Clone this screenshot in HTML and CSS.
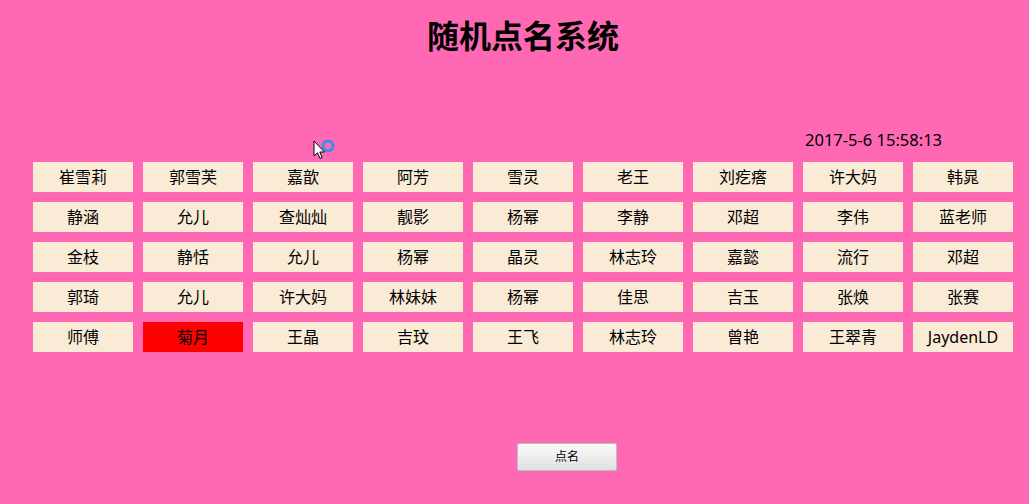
FILE: index.html
```html
<!DOCTYPE html>
<html>
    <head>
        <meta charset="utf-8">
        <title>随机点名系统</title>
        <link rel="stylesheet" href="styles.css">
    </head>
    <body>
        <h1 id="title">随机点名系统</h1>
        <div id="clock">2017-5-6 15:58:13</div>
        <div id="names">
            <div class="name">崔雪莉</div>
            <div class="name">郭雪芙</div>
            <div class="name">嘉歆</div>
            <div class="name">阿芳</div>
            <div class="name">雪灵</div>
            <div class="name">老王</div>
            <div class="name">刘疙瘩</div>
            <div class="name">许大妈</div>
            <div class="name">韩晁</div>
            <div class="name">静涵</div>
            <div class="name">允儿</div>
            <div class="name">查灿灿</div>
            <div class="name">靓影</div>
            <div class="name">杨幂</div>
            <div class="name">李静</div>
            <div class="name">邓超</div>
            <div class="name">李伟</div>
            <div class="name">蓝老师</div>
            <div class="name">金枝</div>
            <div class="name">静恬</div>
            <div class="name">允儿</div>
            <div class="name">杨幂</div>
            <div class="name">晶灵</div>
            <div class="name">林志玲</div>
            <div class="name">嘉懿</div>
            <div class="name">流行</div>
            <div class="name">邓超</div>
            <div class="name">郭琦</div>
            <div class="name">允儿</div>
            <div class="name">许大妈</div>
            <div class="name">林妹妹</div>
            <div class="name">杨幂</div>
            <div class="name">佳思</div>
            <div class="name">吉玉</div>
            <div class="name">张焕</div>
            <div class="name">张赛</div>
            <div class="name">师傅</div>
            <div class="name active">菊月</div>
            <div class="name">王晶</div>
            <div class="name">吉玟</div>
            <div class="name">王飞</div>
            <div class="name">林志玲</div>
            <div class="name">曾艳</div>
            <div class="name">王翠青</div>
            <div class="name">JaydenLD</div>
        </div>
        <div id="controls">
            <button id="pickButton">点名</button>
        </div>
        <!-- mouse cursor captured in the screenshot -->
        <svg id="cursor" width="26" height="24" viewBox="0 0 26 24">
            <path d="M1 1 L1 16 L4.5 12.8 L7 18.5 L9.2 17.5 L6.8 12 L11.5 12 Z" fill="#fff" stroke="#000" stroke-width="1"/>
            <circle cx="15" cy="6" r="5" fill="none" stroke="#3a8ee6" stroke-width="3"/>
        </svg>
    </body>
</html>
```

FILE: styles.css
```css
/* Page layout for the random roll call */
body {
    margin: 0;
    background-color: rgb(255, 105, 180);
    font-family: 'Noto Sans', 'Noto Sans CJK SC', sans-serif;
    color: rgb(0, 0, 0);
    height: 504px;
    overflow: hidden;
    position: relative;
}

#title {
    margin: 0;
    height: 68px;
    line-height: 68px;
    font-family: 'Noto Sans CJK SC', sans-serif;
    font-size: 32px;
    font-weight: bold;
    text-align: center;
    padding-left: 17px;
}

#clock {
    margin-top: 62px;
    height: 20px;
    line-height: 20px;
    font-size: 16.5px;
    padding-left: 805px;
}

#names {
    display: grid;
    grid-template-columns: repeat(9, 100px);
    gap: 10px;
    margin-top: 12px;
    padding-left: 33px;
}

.name {
    height: 30px;
    line-height: 30px;
    background-color: rgb(250, 235, 215);
    text-align: center;
    font-size: 16px;
}

.active {
    background-color: rgb(255, 0, 0);
}

#controls {
    margin-top: 91px;
    padding-left: 517px;
}

#pickButton {
    width: 100px;
    height: 28px;
    font-family: 'Noto Sans CJK SC', sans-serif;
    font-size: 12px;
    line-height: 12px;
    padding: 0 0 2px 0;
    color: rgb(0, 0, 0);
    background: linear-gradient(rgb(250, 250, 250), rgb(225, 225, 225));
    border: 1px solid rgb(190, 190, 190);
    border-radius: 2px;
}

#cursor {
    position: absolute;
    left: 313px;
    top: 140px;
}
```
